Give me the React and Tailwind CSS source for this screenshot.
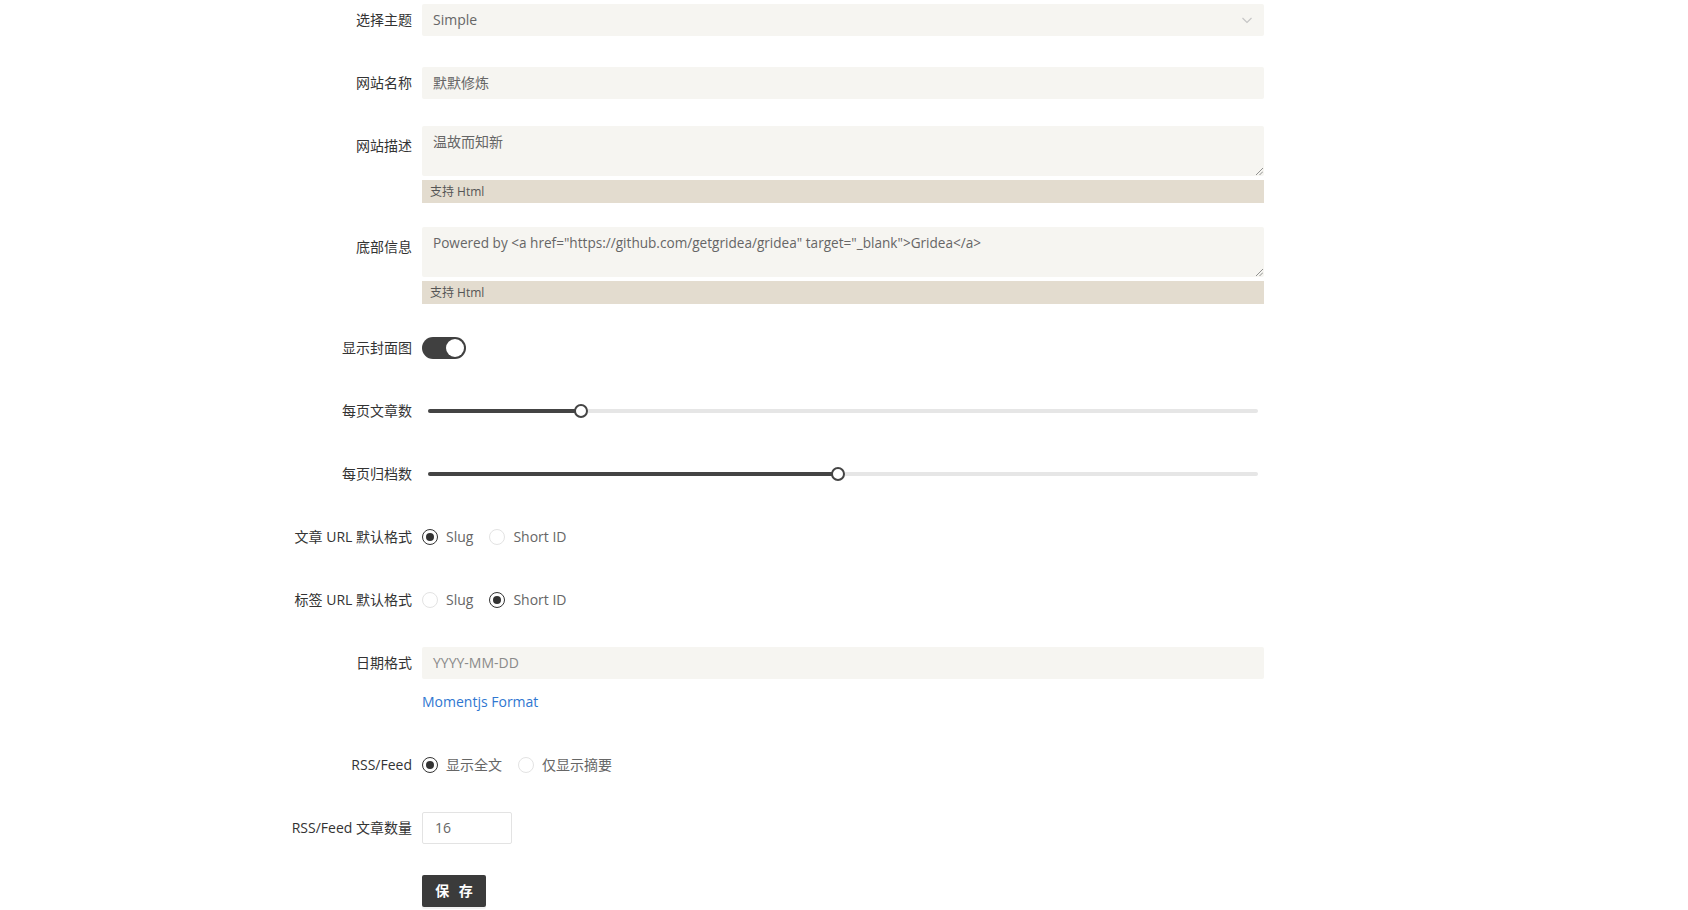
import React from "react";

const FONT = { fontFamily: '"Open Sans", "Noto Sans CJK SC", sans-serif' };

function Row({ label, children }) {
  return (
    <div className="flex mb-[24px]">
      <div className="w-[422px] shrink-0 pr-[10px] text-right text-[14px] leading-[39px] text-[#333]">
        {label}
      </div>
      <div className="w-[842px] min-h-[39px]">{children}</div>
    </div>
  );
}

function Field({ children }) {
  return <div className="h-[39px] flex items-center">{children}</div>;
}

function Radio({ checked, label }) {
  return (
    <label className="flex items-center mr-[8px]">
      <span
        className={
          "w-[16px] h-[16px] rounded-full border flex items-center justify-center bg-white " +
          (checked ? "border-[#333]" : "border-[#e3e3e3]")
        }
      >
        {checked && <span className="w-[8px] h-[8px] rounded-full bg-[#333]" />}
      </span>
      <span className="px-[8px] text-[14px] text-[#666]">{label}</span>
    </label>
  );
}

function Slider({ value }) {
  return (
    <div className="h-[39px] flex items-center px-[6px]">
      <div className="relative w-full h-[4px] rounded-full bg-[#e6e6e6]">
        <div
          className="absolute left-0 top-0 h-[4px] rounded-full bg-[#444]"
          style={{ width: `${value}%` }}
        />
        <div
          className="absolute top-1/2 w-[14px] h-[14px] -mt-[7px] -ml-[7px] rounded-full bg-white border-2 border-[#444]"
          style={{ left: `${value}%` }}
        />
      </div>
    </div>
  );
}

function HtmlHint() {
  return (
    <div className="mt-[4px] h-[23px] bg-[#e3dccf] text-[12px] leading-[23px] text-[#555] pl-[8px]">
      支持 Html
    </div>
  );
}

function Grip() {
  return (
    <svg className="absolute right-[1px] bottom-[1px]" width="8" height="8" viewBox="0 0 8 8" stroke="#777" strokeWidth="0.8">
      <path d="M1 8L8 1M4.5 8L8 4.5" />
    </svg>
  );
}

export default function App() {
  return (
    <div className="min-h-[910px] bg-white" style={FONT}>
      <Row label="选择主题">
        <Field>
          <div className="w-full h-[32px] bg-[#f6f5f1] rounded-[2px] flex items-center justify-between px-[11px] text-[14px] text-[#666]">
            <span>Simple</span>
            <svg width="12" height="12" viewBox="0 0 12 12" fill="none" stroke="#c4c4c4" strokeWidth="1.1">
              <path d="M1.5 4l4.5 4.5L10.5 4" />
            </svg>
          </div>
        </Field>
      </Row>

      <Row label="网站名称">
        <Field>
          <div className="w-full h-[32px] bg-[#f6f5f1] rounded-[2px] flex items-center px-[11px] text-[14px] text-[#666]">
            默默修炼
          </div>
        </Field>
      </Row>

      <Row label="网站描述">
        <div className="relative w-full h-[50px] bg-[#f6f5f1] rounded-[2px] px-[11px] pt-[4px] text-[14px] leading-[24px] text-[#666]">
          温故而知新
          <Grip />
        </div>
        <HtmlHint />
      </Row>

      <Row label="底部信息">
        <div className="relative w-full h-[50px] bg-[#f6f5f1] rounded-[2px] px-[11px] pt-[4px] text-[13.6px] leading-[24px] text-[#666] whitespace-nowrap">
          {'Powered by <a href="https://github.com/getgridea/gridea" target="_blank">Gridea</a>'}
          <Grip />
        </div>
        <HtmlHint />
      </Row>

      <Row label="显示封面图">
        <Field>
          <div className="w-[44px] h-[22px] rounded-full bg-[#404040] relative">
            <div className="absolute right-[2px] top-[2px] w-[18px] h-[18px] rounded-full bg-white" />
          </div>
        </Field>
      </Row>

      <Row label="每页文章数">
        <Slider value={18.4} />
      </Row>

      <Row label="每页归档数">
        <Slider value={49.4} />
      </Row>

      <Row label="文章 URL 默认格式">
        <Field>
          <Radio checked label="Slug" />
          <Radio label="Short ID" />
        </Field>
      </Row>

      <Row label="标签 URL 默认格式">
        <Field>
          <Radio label="Slug" />
          <Radio checked label="Short ID" />
        </Field>
      </Row>

      <Row label="日期格式">
        <Field>
          <div className="w-full h-[32px] bg-[#f6f5f1] rounded-[2px] flex items-center px-[11px] text-[14px] text-[#8a8a8a]">
            YYYY-MM-DD
          </div>
        </Field>
        <div className="h-[39px] flex items-center">
          <a className="text-[14px] text-[#2f77d1]">Momentjs Format</a>
        </div>
      </Row>

      <Row label="RSS/Feed">
        <Field>
          <Radio checked label="显示全文" />
          <Radio label="仅显示摘要" />
        </Field>
      </Row>

      <Row label="RSS/Feed 文章数量">
        <Field>
          <div className="w-[90px] h-[32px] border border-[#e3e3e3] rounded-[2px] bg-white flex items-center px-[12px] text-[14px] text-[#666]">
            16
          </div>
        </Field>
      </Row>

      <Row label="">
        <Field>
          <button className="w-[64px] h-[32px] bg-[#3b3b3b] rounded-[2px] text-white text-[14px] font-bold tracking-[3px] pl-[3px] shadow-[0_2px_0_rgba(0,0,0,0.05)]">
            保 存
          </button>
        </Field>
      </Row>
    </div>
  );
}
